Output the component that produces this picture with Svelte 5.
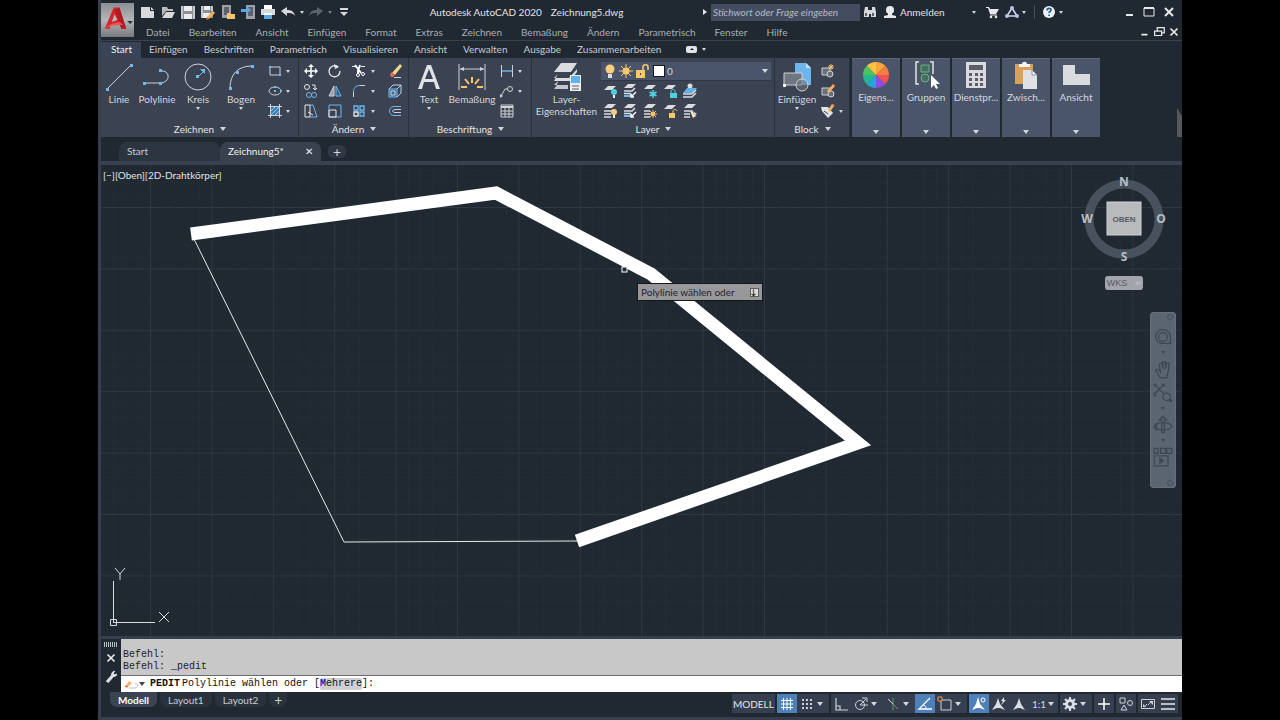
<script lang="ts">
	type Tool = { name: string; icon: string; caret?: boolean; on?: boolean; sep?: boolean };

	// Small icons use a 16x16 grid, large ones a 32x32 grid
	const icons: Record<string, string> = {
		new: '<path d="M1 3h9v4h4v7H1z" fill="#d7d9dc"/><path d="M11 3l3 3h-3z" fill="#d7d9dc"/>',
		open: '<path d="M2 12V3h5l1 2h5v2H6z" fill="#b9bcc0"/><path d="M6 8h9l-3 6H2z" fill="#d7d9dc"/>',
		save: '<path d="M1 2h14v13H1z" fill="#8b9097"/><path d="M4 2h8v5H4zM4 10h8v5H4z" fill="#eceded"/><path d="M1 2h2v13H1zM13 2h2v13h-2z" fill="#c3c6ca"/>',
		saveas: '<path d="M1 2h12v12H1z" fill="#8b9097"/><path d="M4 2h6v4H4zM3 9h7v5H3z" fill="#eceded"/><path d="M1 2h2v12H1zM11 2h2v5h-2z" fill="#c3c6ca"/><path d="M7 13l6-6 2 2-6 6z" fill="#f2b25c"/><path d="M7 13l2 2-3 1z" fill="#e85a4f"/>',
		openweb: '<path d="M2 1h9v13H2z" fill="#9ea2a8"/><path d="M4 3h5v8H4z" fill="#5c626d"/><path d="M7 9h3l1 1h4v5H7z" fill="#f6c26b"/>',
		saveweb: '<path d="M6 1h9v14H6z" fill="#9ea2a8"/><path d="M8 3h5v9H8z" fill="#5c626d"/><path d="M1 5h5V2l5 4-5 4V8H1z" fill="#5aa9e6"/>',
		print: '<path d="M4 1h8v5H4z" fill="#fff"/><path d="M1 5h14v6H1z" fill="#d7d9dc"/><path d="M4 9h8v5H4z" fill="#fff"/><path d="M4 11h8v4H4z" fill="#5fa6df"/>',
		undo: '<path d="M1 7l6-4v3c4 0 7 1 8 6-2-3-4-3-8-3v3z" fill="#d7d9dc"/>',
		redo: '<path d="M15 7L9 3v3c-4 0-7 1-8 6 2-3 4-3 8-3v3z" fill="#5b636f"/>',
		customize: '<path d="M4 4h8v2H4zM4 8h8l-4 4z" fill="#d7d9dc"/>',
		find: '<path d="M3 3h3v3h1v7H2V8zM10 3h3l1 5v5H9V6h1zM7 6h2v4H7z" fill="#d7d9dc"/><path d="M3 9h2v3H3zM10 9h2v3h-2z" fill="#59606c"/>',
		user: '<circle cx="8" cy="6" r="4" fill="#e8e9ea"/><path d="M6 9h4v2l4 1v2H2v-2l4-1z" fill="#e8e9ea"/>',
		cart: '<path d="M2 3h3l1 2h9l-3 5H6L4 4H2z" fill="#e8e9ea"/><path d="M6 11h7" stroke="#e8e9ea"/><circle cx="7" cy="13" r="1.3" fill="#e8e9ea"/><circle cx="12" cy="13" r="1.3" fill="#e8e9ea"/>',
		cloud: '<path d="M8 4L3 12h10z" fill="none" stroke="#cfd4ee" stroke-width="1.6"/><circle cx="8" cy="4" r="2" fill="#b9bff0"/><circle cx="3" cy="12" r="2" fill="#b9bff0"/><circle cx="13" cy="12" r="2" fill="#b9bff0"/>',
		help: '<circle cx="8" cy="8" r="6" fill="#eef2f6"/><path d="M6 6.500c0-3 4-2.500 4-.5 0 1.500-2 1.500-2 3M8 10.500v1.500" fill="none" stroke="#1f5b96" stroke-width="1.6"/>',
		min: '<path d="M5 11h7" stroke="#e8e9ea" stroke-width="2"/>',
		max: '<path d="M3 4h10v8H3z" fill="none" stroke="#e8e9ea"/><path d="M3 4h10" stroke="#e8e9ea" stroke-width="2"/>',
		restore: '<path d="M6 7V3h8v6h-3" fill="none" stroke="#e8e9ea" stroke-width="1.4"/><path d="M3 7h8v5H3z" fill="none" stroke="#e8e9ea" stroke-width="1.4"/>',
		close: '<path d="M4 4l8 8M12 4l-8 8" stroke="#e8e9ea" stroke-width="2"/>',

		line: '<path d="M4 28L28 4" stroke="#cfd2d6"/><path d="M3 27h3v3H3zM27 3h3v3h-3z" fill="#6db9f0"/>',
		pline: '<path d="M3 22h17c10-1 9-13 0-12" fill="none" stroke="#cfd2d6"/><path d="M2 21h3v3H2zM18 21h3v3h-3zM18 8h3v3h-3z" fill="#6db9f0"/>',
		circle: '<circle cx="16" cy="16" r="13" fill="none" stroke="#cfd2d6"/><path d="M16 16l6-6" stroke="#6db9f0"/><path d="M14 14h3v3h-3zM23 8v5l-5-5z" fill="#6db9f0"/>',
		arc: '<path d="M5 27C5 13 13 5 27 5" fill="none" stroke="#cfd2d6"/><path d="M4 26h3v3H4zM11 10h3v3h-3zM26 4h3v3h-3z" fill="#6db9f0"/>',
		rect: '<path d="M3 4h10v8H3z" fill="none" stroke="#cfd2d6"/><path d="M2 3h2v2H2zM12 11h2v2h-2z" fill="#6db9f0"/>',
		ellipse: '<ellipse cx="8" cy="8" rx="6" ry="4" fill="none" stroke="#cfd2d6"/><path d="M7 7h2v2H7zM7 3h2v2H7zM13 7h2v2h-2z" fill="#6db9f0"/>',
		hatch: '<path d="M4 4h8v8H4z" fill="#3f7cb0"/><path d="M4 8l4-4M4 12l8-8M8 12l4-4" stroke="#8cc8f2"/><path d="M1 3.500h14M1 12.500h14M3.500 1v14M12.500 1v14" stroke="#cfd2d6"/>',
		move: '<path d="M8 3v10M3 8h10" stroke="#fff" stroke-width="1.5"/><path d="M8 1l3 3H5zM8 15l3-3H5zM1 8l3-3v6zM15 8l-3-3v6z" fill="#fff"/>',
		rotate: '<path d="M11 4a5.500 5.500 0 1 0 2 4" fill="none" stroke="#e6e8ea" stroke-width="1.3"/><path d="M7 1l5 3-4 2z" fill="#e6e8ea"/>',
		trim: '<path d="M1 3.500h5M10 3.500h4" stroke="#e6e8ea"/><path d="M4 2l6 8M9 2L7 8v3" stroke="#fff" stroke-width="2" fill="none"/><circle cx="7" cy="12" r="1.500" fill="none" stroke="#fff"/><circle cx="12" cy="11" r="1.500" fill="none" stroke="#fff"/>',
		erase: '<path d="M5 10l8-9 2 2-7 9z" fill="#f8d78c"/><path d="M3 11l2-2 3 3-2 2H4z" fill="#e8685f"/><path d="M7 14.500h7" stroke="#cfd2d6"/>',
		copy: '<circle cx="4" cy="4" r="2.500" fill="none" stroke="#e6e8ea"/><path d="M9 2h3v4M10 5l2 2 2-2" fill="none" stroke="#e6e8ea"/><circle cx="6" cy="12" r="2.500" fill="none" stroke="#6db9f0"/><circle cx="11" cy="12" r="2.500" fill="none" stroke="#6db9f0"/>',
		mirror: '<path d="M7 3v10H2z" fill="#9a9fa8" stroke="#cfd2d6"/><path d="M9 3v10h5z" fill="#2f5a7e" stroke="#6db9f0"/>',
		fillet: '<path d="M2.500 9c0-4 2-6.500 6.500-6.500" fill="none" stroke="#6db9f0"/><path d="M9 2.500h5M2.500 14V9" stroke="#cfd2d6"/>',
		explode: '<path d="M2 6h8v8H2z" fill="#3f6a90" stroke="#6db9f0"/><path d="M2 6l4-4h8v8l-4 4M10 6l4-4" fill="none" stroke="#b9d6ec"/><path d="M4 8h4v4H4z" fill="none" stroke="#cfd2d6"/>',
		stretch: '<path d="M2 2h5v12H2z" fill="none" stroke="#e6e8ea"/><path d="M7 2l3 0 4 12H7" fill="none" stroke="#6db9f0"/><path d="M5 9l5 3" stroke="#e6e8ea"/>',
		scale: '<path d="M2 2h12v12H2z" fill="none" stroke="#6db9f0"/><path d="M2 7h7v7H2z" fill="none" stroke="#e6e8ea"/>',
		array: '<path d="M3 3h4v4H3zM9 3h4v4H9zM9 9h4v4H9z" fill="none" stroke="#6db9f0" stroke-width="1.3"/><path d="M3 9h4v4H3z" fill="none" stroke="#e6e8ea" stroke-width="1.3"/>',
		offset: '<path d="M14 3.500H7c-6 0-6 9 0 9h7" fill="none" stroke="#6db9f0"/><path d="M14 6.500H8c-3 0-3 3 0 3h6" fill="none" stroke="#cfd2d6"/>',
		text: '<path fill-rule="evenodd" d="M14 4h4l9 24h-4l-2-7H11l-2 7H5zM16 8l-4 10h8z" fill="#e1e3e6"/>',
		dim: '<path d="M3 3v26M29 3v26" stroke="#cfd2d6"/><path d="M4 8h24" stroke="#cfd2d6"/><path d="M4 8l4-2v4zM28 8l-4-2v4z" fill="#cfd2d6"/><path d="M16 16v6M9 18l4 5M23 18l-4 5M5 26h6M21 26h6" stroke="#f9c76c" stroke-width="2"/>',
		dimlin: '<path d="M2.500 2v12M13.500 2v12" stroke="#cfd2d6"/><path d="M3 8h10" stroke="#6db9f0" stroke-width="1.4"/>',
		leader: '<circle cx="11" cy="6" r="2.500" fill="none" stroke="#cfd2d6"/><path d="M9 6H6l-4 7" fill="none" stroke="#cfd2d6"/><path d="M1 15v-4l3 2z" fill="#cfd2d6"/>',
		table: '<path d="M2 2h12v12H2z" fill="none" stroke="#cfd2d6"/><path d="M2 3h12v2H2z" fill="#cfd2d6"/><path d="M2 8h12M2 11h12M6 5v9M10 5v9" stroke="#cfd2d6"/>',
		layers: '<path d="M10 2h16l-6 9H3z" fill="#dadcdf"/><path d="M7 13l-4 4h15l8-9v3l-7 9H3z" fill="#dadcdf"/><path d="M7 20l-4 4h14v4H3l3-4z" fill="#c3c6cb"/><path d="M19 14h11v16H19z" fill="#eceef0"/><path d="M20 15h9v7h-9z" fill="#5fb2ea"/><path d="M21 25h7M21 28h7" stroke="#59606c"/>',
		lyoff: '<path d="M6 3h8l-4 4H2z" fill="#dadcdf"/><circle cx="12" cy="9" r="3" fill="#4fd0dd"/><path d="M11 12h2v3h-2z" fill="#eceef0"/>',
		lymatch: '<path d="M6 1h8l-4 4H2z" fill="#dadcdf"/><path d="M2 8h8l3-3M2 10.500h7" stroke="#dadcdf" stroke-width="1.5" fill="none"/><path d="M2 13h6l2-2" stroke="#6db9f0" stroke-width="2" fill="none"/><path d="M9 14l5-5M9 11v3h3" stroke="#fff" stroke-width="1.3" fill="none"/>',
		lyfreeze: '<path d="M6 2h8l-4 4H2z" fill="#dadcdf"/><path d="M11 7v8M7.500 9l7 4M14.500 9l-7 4" stroke="#4fd0dd" stroke-width="1.5"/><circle cx="11" cy="11" r="2" fill="none" stroke="#4fd0dd"/>',
		lylock: '<path d="M6 2h8l-4 4H2z" fill="#dadcdf"/><path d="M9 10V8c0-2 4-2 4 0v2" fill="none" stroke="#4fd0dd"/><path d="M8 10h7v5H8z" fill="#4fd0dd"/>',
		lycur: '<circle cx="8" cy="3" r="2.500" fill="#dadcdf"/><path d="M5 5h10l-4 5H1z" fill="#5fb2ea"/><path d="M1 11h9l4-4M1 14h9l4-4" stroke="#dadcdf" stroke-width="1.5" fill="none"/>',
		lyon: '<path d="M6 1h8l-4 4H2z" fill="#dadcdf"/><path d="M2 8h8M2 11h7M2 14h7" stroke="#dadcdf" stroke-width="1.500"/><circle cx="12" cy="9" r="3" fill="#f9cf7d"/><path d="M11 12h2v3h-2z" fill="#eceef0"/>',
		lythaw: '<path d="M6 1h8l-4 4H2z" fill="#dadcdf"/><path d="M2 8h6M2 11h6M2 14h6" stroke="#dadcdf" stroke-width="1.500"/><circle cx="11" cy="11" r="2" fill="#f9c76c"/><path d="M11 7v8M7 11h8M8 8l6 6M14 8l-6 6" stroke="#f9c76c"/>',
		lyunlock: '<path d="M6 2h8l-4 4H2z" fill="#dadcdf"/><path d="M11 10V8c0-2 4-2 4 0" fill="none" stroke="#f9c76c"/><path d="M7 10h6v5H7z" fill="#f9c76c"/>',
		lymore: '<path d="M6 1h8l-4 4H2z" fill="#dadcdf"/><path d="M2 8h9M2 11h6M2 14h6" stroke="#dadcdf" stroke-width="1.500"/><path d="M8 8l3 1 3 4-3 2z" fill="#f3e3c0"/><path d="M11 8l4 3-2 1z" fill="#dadcdf"/>',
		bulb: '<circle cx="8" cy="6" r="4.500" fill="#f9cf7d"/><path d="M6 11h4v4H6z" fill="#dadcdf"/>',
		sun: '<circle cx="8" cy="8" r="3.500" fill="#f9c76c"/><path d="M8 1v14M1 8h14M3 3l10 10M13 3L3 13" stroke="#f9c76c"/>',
		unlocked: '<path d="M9 8V4c0-3 5-3 5 0v3" fill="none" stroke="#f9c76c" stroke-width="1.600"/><path d="M2 7h9v8H2z" fill="#f9c76c"/><path d="M6 10h1v2H6z" fill="#3b4252"/>',
		insert: '<path d="M14 2h11l5 5v17H17V12h-3z" fill="#6db5ee"/><path d="M25 2l5 5h-5z" fill="#c4e2f8"/><path d="M3 12h18v12H3z" fill="#70767f" stroke="#cfd2d6"/><circle cx="21" cy="24" r="6" fill="#70767f" fill-opacity=".6" stroke="#cfd2d6"/><path d="M2 23h3v3H2z" fill="#fff"/>',
		bcreate: '<path d="M2 5h8v7H2z" fill="#6a707b" stroke="#cfd2d6"/><circle cx="10" cy="11" r="3" fill="#6a707b" stroke="#cfd2d6"/><path d="M11 1v6M8 4h6M9 2l4 4M13 2L9 6" stroke="#f9c76c"/>',
		bedit: '<path d="M2 5h8v7H2z" fill="#6a707b" stroke="#cfd2d6"/><circle cx="11" cy="11" r="3" fill="#6a707b" stroke="#cfd2d6"/><path d="M7 8l6-7 2 2-6 7z" fill="#f2b25c"/><path d="M12 2l2-1 1 2z" fill="#e8685f"/>',
		battr: '<path d="M1 4h7l5 6-5 5-6-7z" fill="#e1e3e6"/><path d="M4 8l4 3" stroke="#3b4252"/><path d="M8 7l4-6 2 2-4 6z" fill="#f2b25c"/><path d="M12 1l2 0 1 3z" fill="#e8685f"/>',
		group: '<path d="M9 3H6v22h3M20 3h3v12" fill="none" stroke="#e1e3e6" stroke-width="1.500"/><path d="M11 6h8v7h-8z" fill="#45705d" stroke="#64b588"/><circle cx="15" cy="19" r="4" fill="#45705d" stroke="#64b588"/><path d="M21 16v13l3-3 2 4 2-1-2-4h4z" fill="#fff"/>',
		calc: '<path d="M6 3h20v26H6z" fill="#d9dbde"/><path d="M9 6h14v5H9z" fill="#5a5e66"/><path d="M9 14h3v3H9zM15 14h3v3h-3zM20 14h3v3h-3zM9 19h3v3H9zM15 19h3v3h-3zM20 19h3v3h-3zM9 24h3v3H9zM15 24h3v3h-3zM20 24h3v3h-3z" fill="#5a5e66"/>',
		paste: '<path d="M5 5h18v20H5z" fill="#d9a05c"/><path d="M9 8h11V5h-3c0-3-5-3-5 0H9z" fill="#f4f4f4"/><path d="M13 11h9l5 5v14H13z" fill="#dfe0e3"/><path d="M22 11l5 5h-5z" fill="#fff" stroke="#8d9199"/>',
		view: '<path d="M3 6h12v9h15v11H3z" fill="#d9dbde"/>',

		wheel: '<path d="M8 8m-6 0a6 6 0 1 1 12 0v5H8a6 6 0 0 1-6-5z" fill="none" stroke="#3e4854"/><circle cx="8" cy="8" r="3.500" fill="none" stroke="#3e4854"/>',
		hand: '<path d="M3 8l2 1 1 2-1-7 2-1 1 5V2h2v6l1-5h2l-1 8-1 4H6L2 9z" fill="none" stroke="#3e4854"/>',
		extents: '<path d="M1 1l8 8M9 1L1 9M1 3V1h2M7 1h2v2M1 8v2h2" fill="none" stroke="#3e4854"/><circle cx="11" cy="11" r="3" fill="none" stroke="#3e4854"/><path d="M13 13l2 2" stroke="#3e4854" stroke-width="2"/>',
		orbit: '<ellipse cx="8" cy="9" rx="7" ry="3" fill="none" stroke="#3e4854"/><path d="M8 1l3 3H9v10H7V4H5zM3 8v4l-2-2z" fill="none" stroke="#3e4854"/>',
		motion: '<path d="M1 1h3v4H1zM6 1h4v4H6zM11 1h4v4h-4zM1 7h11v8H1z" fill="none" stroke="#3e4854"/><path d="M5 8l4 3-4 3z" fill="#3e4854"/>',

		grid: '<path d="M4.500 2v12M8 2v12M11.500 2v12M2 4.500h12M2 8h12M2 11.500h12" stroke="#fff"/>',
		snap: '<path d="M3 3h2v2H3zM7 3h2v2H7zM11 3h2v2h-2zM3 7h2v2H3zM7 7h2v2H7zM11 7h2v2h-2zM3 11h2v2H3zM7 11h2v2H7zM11 11h2v2h-2z" fill="#cfd2d6"/>',
		ortho: '<path d="M3 2v12h12M3 10h4v4" fill="none" stroke="#cfd2d6" stroke-width="1.200"/>',
		polar: '<circle cx="7" cy="9" r="4.500" fill="none" stroke="#cfd2d6"/><path d="M7 9h8M7 9l6-6M9 2h5v4" fill="none" stroke="#cfd2d6"/>',
		iso: '<path d="M8 2v12" stroke="#55a36c"/><path d="M3 3l10 10" stroke="#b96c66"/><path d="M3 3l5 5" stroke="#cfd2d6"/>',
		otrack: '<path d="M13 2L2 13h13" fill="none" stroke="#fff" stroke-width="1.300"/><path d="M6 9c2 0 3 2 3 4" fill="none" stroke="#fff"/>',
		osnap: '<path d="M4 4h10v10H4z" fill="none" stroke="#cfd2d6"/><path d="M1 1h4v4H1z" fill="#3b4252" stroke="#e69a5c"/>',
		annvis: '<path d="M7 1l2 7 5 6-5-2H6l-5 2 4-6z" fill="#fff"/><circle cx="12" cy="4" r="2" fill="none" stroke="#fff"/>',
		annauto: '<path d="M7 2l2 6 5 6-5-2H6l-5 2 4-6z" fill="#dcdfe3"/><path d="M13 1l-3 4h2l-2 4 5-5h-2z" fill="#dcdfe3"/>',
		annscale: '<path d="M8 2l2 6 4 6-5-2H7l-5 2 4-6z" fill="#dcdfe3"/>',
		gear: '<circle cx="8" cy="8" r="3.500" fill="none" stroke="#dcdfe3" stroke-width="3"/><path d="M8 1v3M8 12v3M1 8h3M12 8h3M3 3l2 2M11 11l2 2M13 3l-2 2M5 11l-2 2" stroke="#dcdfe3" stroke-width="2"/>',
		plus: '<path d="M8 2v12M2 8h12" stroke="#fff" stroke-width="1.500"/>',
		isolate: '<path d="M2 2h5v5H2z" fill="none" stroke="#cfd2d6"/><circle cx="12" cy="7" r="2.500" fill="none" stroke="#cfd2d6"/><path d="M6 9l3 5H3z" fill="none" stroke="#cfd2d6"/>',
		clean: '<path d="M1.500 3.500h13v9h-13z" fill="none" stroke="#cfd2d6"/><path d="M9 5h4v4zM3 8v3h3z" fill="#cfd2d6"/><path d="M8 9l4-4M4 11l3-3" stroke="#cfd2d6"/>',
		burger: '<path d="M1 3h14M1 8h14M1 13h14" stroke="#e8e9ea" stroke-width="1.500"/>',
		wrench: '<path d="M2 14l6-7c0-3 2-5 5-5l-2 3 1 1 3-1c0 3-2 4-4 4l-6 7z" fill="#dcdfe3"/>',
		pencil: '<path d="M2 11l4-6 3 2-5 5z" fill="#f4b46a"/><path d="M2 11l1-2 2 2z" fill="#e05545"/><path d="M6 12h6c4 0 3-5 0-4" fill="none" stroke="#b9bcc0"/>'
	};

	const quick = ['new', 'open', 'save', 'saveas', 'openweb', 'saveweb', 'print'];
	const menus = ['Datei', 'Bearbeiten', 'Ansicht', 'Einfügen', 'Format', 'Extras', 'Zeichnen', 'Bemaßung', 'Ändern', 'Parametrisch', 'Fenster', 'Hilfe'];
	const tabs = ['Start', 'Einfügen', 'Beschriften', 'Parametrisch', 'Visualisieren', 'Ansicht', 'Verwalten', 'Ausgabe', 'Zusammenarbeiten'];

	const drawTools: Tool[] = [
		{ name: 'Linie', icon: 'line' },
		{ name: 'Polylinie', icon: 'pline' },
		{ name: 'Kreis', icon: 'circle', caret: true },
		{ name: 'Bogen', icon: 'arc', caret: true }
	];
	const drawSmall: Tool[] = [
		{ name: 'Rechteck', icon: 'rect', caret: true },
		{ name: 'Ellipse', icon: 'ellipse', caret: true },
		{ name: 'Schraffur', icon: 'hatch', caret: true }
	];
	const modifyTools: Tool[] = [
		{ name: 'Schieben', icon: 'move' },
		{ name: 'Drehen', icon: 'rotate' },
		{ name: 'Stutzen', icon: 'trim', caret: true },
		{ name: 'Löschen', icon: 'erase' },
		{ name: 'Kopieren', icon: 'copy' },
		{ name: 'Spiegeln', icon: 'mirror' },
		{ name: 'Abrunden', icon: 'fillet', caret: true },
		{ name: 'Ursprung', icon: 'explode' },
		{ name: 'Strecken', icon: 'stretch' },
		{ name: 'Skalieren', icon: 'scale' },
		{ name: 'Reihe', icon: 'array', caret: true },
		{ name: 'Versetzen', icon: 'offset' }
	];
	const noteSmall: Tool[] = [
		{ name: 'Linear', icon: 'dimlin', caret: true },
		{ name: 'Führungslinie', icon: 'leader', caret: true },
		{ name: 'Tabelle', icon: 'table' }
	];
	const layerTools = ['lyoff', 'lymatch', 'lyfreeze', 'lylock', 'lycur', 'lyon', 'lymatch', 'lythaw', 'lyunlock', 'lymore'];
	const blockSmall: Tool[] = [
		{ name: 'Erstellen', icon: 'bcreate' },
		{ name: 'Bearbeiten', icon: 'bedit' },
		{ name: 'Attribute', icon: 'battr', caret: true }
	];
	const collapsed: Tool[] = [
		{ name: 'Eigens...', icon: 'colors' },
		{ name: 'Gruppen', icon: 'group' },
		{ name: 'Dienstpr...', icon: 'calc' },
		{ name: 'Zwisch...', icon: 'paste' },
		{ name: 'Ansicht', icon: 'view' }
	];
	const nav: Tool[] = [
		{ name: 'Navigationsrad', icon: 'wheel', caret: true },
		{ name: 'Pan', icon: 'hand' },
		{ name: 'Zoom', icon: 'extents', caret: true },
		{ name: 'Orbit', icon: 'orbit', caret: true },
		{ name: 'ShowMotion', icon: 'motion' }
	];
	const status: Tool[] = [
		{ name: 'Raster', icon: 'grid', on: true },
		{ name: 'Fang', icon: 'snap', caret: true, sep: true },
		{ name: 'Ortho', icon: 'ortho' },
		{ name: 'Polarfang', icon: 'polar', caret: true },
		{ name: 'Isometrie', icon: 'iso', caret: true },
		{ name: 'Objektfangspur', icon: 'otrack', on: true },
		{ name: 'Objektfang', icon: 'osnap', caret: true, sep: true },
		{ name: 'Beschriftungssichtbarkeit', icon: 'annvis', on: true },
		{ name: 'Automatisch skalieren', icon: 'annauto' },
		{ name: 'Beschriftungsmaßstab', icon: 'annscale' }
	];

	// Major grid lines every 61.4 units, minor ones in fifths
	const step = 61.4;
	const lines = Array.from({ length: 160 }, (_, i) => i - 4);
	const wheelColors = ['#fba63c', '#f47c43', '#ee5350', '#8a4be8', '#23a4dd', '#27b98e', '#4cc35f', '#fbc342'];

	function slice(i: number): string {
		const a = (i * Math.PI) / 4 - Math.PI / 2;
		const b = a + Math.PI / 4;
		return `M16 16L${16 + 13 * Math.cos(a)} ${16 + 13 * Math.sin(a)}A13 13 0 0 1 ${16 + 13 * Math.cos(b)} ${16 + 13 * Math.sin(b)}z`;
	}

	let activeTab = $state('Start');
	let layout = $state('Modell');
	let search = $state('');
	let layer = $state('0');
</script>

{#snippet icon(name: string, size = 16)}
	<svg class={size === 32 ? 'icon-lg' : 'icon'} viewBox="0 0 {size} {size}" aria-hidden="true">
		{#if name === 'colors'}
			{#each wheelColors as color, i}
				<path d={slice(i)} fill={color} />
			{/each}
		{:else}
			{@html icons[name]}
		{/if}
	</svg>
{/snippet}

{#snippet big(tool: Tool)}
	<button class="big">
		{@render icon(tool.icon, 32)}
		<span>{tool.name}</span>
		{#if tool.caret}<i class="caret"></i>{/if}
	</button>
{/snippet}

{#snippet small(tool: Tool)}
	<button class="small" aria-label={tool.name}>
		{@render icon(tool.icon)}
		{#if tool.caret}<i class="caret"></i>{/if}
	</button>
{/snippet}

<div class="screen">
	<div class="app">
		<header>
			<button class="app-button" aria-label="Anwendungsmenü">
				<svg viewBox="0 0 34 34" aria-hidden="true">
					<path d="M4 26L13 4h6l7 22h-5l-2-6-9 2-1 4z" fill="#d3232b" />
					<path d="M14 11l-3 8 6-2z" fill="#b9b6b6" />
					<path d="M19 4l7 22h-5L14 7z" fill="#b01b23" />
					<path d="M4 26l6-5 9-2 4 3-12 1z" fill="#ef5350" />
					<path d="M27 18h6l-3 3z" fill="#2b2f36" />
				</svg>
			</button>
			<div class="bars">
				<div class="title-row">
					<div class="quick">
						{#each quick as name}
							<button class="ic" aria-label={name}>{@render icon(name)}</button>
						{/each}
						<button class="ic" aria-label="Zurück">{@render icon('undo')}</button>
						<i class="caret slot"></i>
						<button class="ic" aria-label="Wiederholen">{@render icon('redo')}</button>
						<i class="caret slot dim"></i>
						<button class="ic" aria-label="Anpassen">{@render icon('customize')}</button>
					</div>
					<div class="caption"><span>Autodesk AutoCAD 2020</span><span>Zeichnung5.dwg</span></div>
					<i class="arrow"></i>
					<input class="search" aria-label="Suche" placeholder="Stichwort oder Frage eingeben" bind:value={search} />
					<button class="ic" aria-label="Suchen">{@render icon('find')}</button>
					<button class="account">{@render icon('user')}<span>Anmelden</span><i class="caret"></i></button>
					<button class="ic" aria-label="App Store">{@render icon('cart')}</button>
					<button class="ic" aria-label="Autodesk">{@render icon('cloud')}</button>
					<i class="caret"></i>
					<i class="divider"></i>
					<button class="ic" aria-label="Hilfe">{@render icon('help')}</button>
					<i class="caret"></i>
					<div class="window">
						<button class="ic" aria-label="Minimieren">{@render icon('min')}</button>
						<button class="ic" aria-label="Maximieren">{@render icon('max')}</button>
						<button class="ic" aria-label="Schließen">{@render icon('close')}</button>
					</div>
				</div>
				<div class="menu-row">
					<nav>
						{#each menus as item}
							<button>{item}</button>
						{/each}
					</nav>
					<div class="window doc">
						<button aria-label="Zeichnung minimieren">{@render icon('min')}</button>
						<button aria-label="Zeichnung wiederherstellen">{@render icon('restore')}</button>
						<button aria-label="Zeichnung schließen">{@render icon('close')}</button>
					</div>
				</div>
			</div>
		</header>

		<div class="tabs">
			{#each tabs as tab}
				<button class:active={activeTab === tab} onclick={() => (activeTab = tab)}>{tab}</button>
			{/each}
			<button class="pill" aria-label="Multifunktionsleiste minimieren"><b><i></i></b><i class="caret"></i></button>
		</div>

		<div class="ribbon">
			<section class="panel">
				<div class="body draw">
					{#each drawTools as tool}{@render big(tool)}{/each}
					<div class="column">
						{#each drawSmall as tool}{@render small(tool)}{/each}
					</div>
				</div>
				<button class="foot">Zeichnen<i class="caret wide"></i></button>
			</section>
			<section class="panel">
				<div class="body modify">
					{#each modifyTools as tool}{@render small(tool)}{/each}
				</div>
				<button class="foot">Ändern<i class="caret wide"></i></button>
			</section>
			<section class="panel">
				<div class="body note">
					{@render big({ name: 'Text', icon: 'text', caret: true })}
					{@render big({ name: 'Bemaßung', icon: 'dim' })}
					<div class="column">
						{#each noteSmall as tool}{@render small(tool)}{/each}
					</div>
				</div>
				<button class="foot">Beschriftung<i class="caret wide"></i></button>
			</section>
			<section class="panel">
				<div class="body layer">
					{@render big({ name: 'Layer- Eigenschaften', icon: 'layers' })}
					<div>
						<div class="combo">
							{@render icon('bulb')}
							{@render icon('sun')}
							{@render icon('unlocked')}
							<b></b>
							<select aria-label="Layer" bind:value={layer}>
								<option>0</option>
							</select>
							<i class="caret wide"></i>
						</div>
						<div class="layer-tools">
							{#each layerTools as name}
								<button class="small" aria-label={name}>{@render icon(name)}</button>
							{/each}
						</div>
					</div>
				</div>
				<button class="foot">Layer<i class="caret wide"></i></button>
			</section>
			<section class="panel">
				<div class="body block">
					{@render big({ name: 'Einfügen', icon: 'insert', caret: true })}
					<div class="column">
						{#each blockSmall as tool}{@render small(tool)}{/each}
					</div>
				</div>
				<button class="foot">Block<i class="caret wide"></i></button>
			</section>
			<div class="collapsed">
				{#each collapsed as tool}
					<button>
						{@render icon(tool.icon, 32)}
						<span>{tool.name}</span>
						<i class="caret wide"></i>
					</button>
				{/each}
			</div>
			<svg class="corner" viewBox="0 0 5 29" aria-hidden="true"><path d="M0 0l5 8v21H0z" /></svg>
		</div>

		<div class="files">
			<button class="file">Start</button>
			<button class="file active">Zeichnung5*<span>✕</span></button>
			<button class="add" aria-label="Neue Zeichnung">+</button>
		</div>

		<main>
			<svg class="drawing" aria-hidden="true">
				{#each lines as n}
					<path class={(n + 400) % 5 === 0 ? 'major' : 'minor'} d="M{49.5 + (n * step) / 5} 0v2000M0 {42.5 + (n * step) / 5}h4000" />
				{/each}
				<polyline class="thin" points="92,72 243,377 477,376" />
				<polyline class="thick" points="90,69 395,28 550,109 757,278 476,376" />
				<rect class="pick" x="521" y="102" width="5" height="5" />
			</svg>

			<button class="view-label">[−][Oben][2D-Drahtkörper]</button>

			<svg class="ucs" viewBox="0 0 64 64" aria-hidden="true">
				<path d="M5.500 16v42M5 57.500h42M2.500 54.500h6v6h-6zM7 3l5 6 5-6M12 9v6M51 47l10 10M61 47L51 57" />
			</svg>

			<div class="prompt">Polylinie wählen oder<b>↓</b></div>

			<div class="cube">
				<svg viewBox="0 0 88 92">
					<circle cx="44" cy="46" r="35" />
					<rect x="27" y="29" width="34" height="33" />
					<text class="face" x="44" y="49">OBEN</text>
					<text x="44" y="13">N</text>
					<text x="44" y="88">S</text>
					<text x="7" y="50">W</text>
					<text x="81" y="50">O</text>
				</svg>
				<button>WKS<i></i></button>
			</div>

			<div class="navbar">
				<i class="dot"></i>
				{#each nav as tool}
					<button aria-label={tool.name}>{@render icon(tool.icon)}</button>
					{#if tool.caret}<i class="caret"></i>{/if}
				{/each}
				<i class="dot last"></i>
			</div>
		</main>

		<div class="command">
			<div class="handle">
				<i class="grip"></i>
				<button aria-label="Befehlszeile schließen">{@render icon('close')}</button>
				<button aria-label="Anpassen">{@render icon('wrench')}</button>
			</div>
			<div class="console">
				<div class="history"><p>Befehl:</p><p>Befehl: _pedit</p></div>
				<div class="entry">
					{@render icon('pencil')}
					<i class="caret"></i>
					<strong>PEDIT</strong>
					<span>Polylinie wählen oder [<button><em>M</em>ehrere</button>]:</span>
				</div>
			</div>
		</div>

		<footer>
			<div class="layouts">
				{#each ['Modell', 'Layout1', 'Layout2'] as name}
					<button class:active={layout === name} onclick={() => (layout = name)}>{name}</button>
				{/each}
				<button class="plus" aria-label="Neues Layout">+</button>
			</div>
			<div class="status">
				<button class="label sep">MODELL</button>
				{#each status as item}
					<button class:on={item.on} class:sep={item.sep} aria-label={item.name}>
						{@render icon(item.icon)}
						{#if item.caret}<i class="caret"></i>{/if}
					</button>
				{/each}
				<button class="sep scale">1:1<i class="caret"></i></button>
				<button class="sep" aria-label="Arbeitsbereich">{@render icon('gear')}<i class="caret"></i></button>
				<button class="sep" aria-label="Monitor">{@render icon('plus')}</button>
				<button class="sep" aria-label="Objekte isolieren">{@render icon('isolate')}</button>
				<button aria-label="Vollbild">{@render icon('clean')}</button>
				<button aria-label="Anpassung">{@render icon('burger')}</button>
			</div>
		</footer>
	</div>
</div>

<style>
	:global(body) {
		margin: 0;
		background: #000;
	}
	.screen {
		box-sizing: border-box;
		min-height: 100vh;
		padding: 0 98px;
		display: flex;
		background: #000;
	}
	.app {
		flex: 1;
		min-width: 0;
		box-sizing: border-box;
		display: flex;
		flex-direction: column;
		overflow: hidden;
		border-left: 3px solid #363f4d;
		border-bottom: 3px solid #363f4d;
		background: #202831;
		color: #d3d7dc;
		font: 10px/14px Lato, 'Open Sans', sans-serif;
	}
	button,
	input,
	select {
		margin: 0;
		padding: 0;
		border: 0;
		background: none;
		color: inherit;
		font: inherit;
		white-space: nowrap;
	}
	button {
		display: flex;
		align-items: center;
		justify-content: center;
	}
	.icon {
		width: 16px;
		height: 16px;
		flex: none;
	}
	.icon-lg {
		width: 32px;
		height: 32px;
		flex: none;
	}
	.caret {
		flex: none;
		width: 0;
		height: 0;
		border: 2px solid transparent;
		border-top: 3px solid #d3d7dc;
		border-bottom: 0;
	}
	.caret.wide {
		border-width: 4px 3px 0;
	}
	.caret.dim {
		opacity: 0.5;
	}
	.caret.slot {
		margin: 0 2px;
	}

	/* Title and menu bars */
	header {
		display: flex;
		height: 40px;
		border-bottom: 1px solid #39424f;
	}
	.app-button {
		width: 33px;
		height: 34px;
		margin-top: 3px;
		background: linear-gradient(#8b8e93, #b5b6b9 50%, #77797e);
	}
	.app-button svg {
		width: 33px;
		height: 34px;
	}
	.bars {
		flex: 1;
		min-width: 0;
	}
	.title-row {
		height: 24px;
		display: flex;
		align-items: center;
		color: #e2e4e7;
	}
	.quick {
		display: flex;
		align-items: center;
		padding-left: 4px;
	}
	.ic {
		width: 20px;
		height: 20px;
	}
	.caption {
		flex: 1;
		display: flex;
		justify-content: center;
		gap: 9px;
		padding-right: 4px;
		line-height: 12px;
		white-space: nowrap;
	}
	.arrow {
		border: 3px solid transparent;
		border-left: 4px solid #e2e4e7;
		border-right: 0;
		margin-right: 4px;
	}
	.search {
		width: 149px;
		height: 17px;
		box-sizing: border-box;
		padding: 0 2px;
		background: #444c60;
	}
	.search::placeholder {
		color: #b4bac5;
		font-style: italic;
		opacity: 1;
	}
	.account {
		width: 96px;
		gap: 2px;
		padding-left: 2px;
		margin-right: 6px;
	}
	.account .caret {
		margin-left: auto;
	}
	.divider {
		width: 1px;
		height: 14px;
		margin: 0 4px 0 8px;
		background: #454d59;
	}
	.window {
		display: flex;
		margin: 0 3px 0 56px;
	}
	.menu-row {
		height: 16px;
		display: flex;
		align-items: center;
		justify-content: space-between;
		color: #a9afb8;
	}
	nav {
		display: flex;
		gap: 19px;
		padding-left: 12px;
	}
	nav button {
		line-height: 12px;
	}
	.window.doc {
		margin: 0 1px;
	}
	.window.doc button {
		width: 15px;
		height: 16px;
	}
	.window.doc .icon {
		width: 14px;
		height: 14px;
	}

	/* Ribbon */
	.tabs {
		display: flex;
		height: 16px;
		margin-top: 1px;
	}
	.tabs button {
		padding: 0 8px 2px;
		color: #c7ccd3;
	}
	.tabs .active {
		padding: 0 9px 2px 10px;
		background: #3b4356;
		color: #f0f1f3;
	}
	.tabs .pill {
		gap: 5px;
		margin-left: 9px;
	}
	.pill b {
		display: flex;
		justify-content: center;
		align-items: center;
		width: 11px;
		height: 7px;
		border-radius: 2px;
		background: #e2e4e7;
	}
	.pill b i {
		border: 2px solid transparent;
		border-top: 0;
		border-bottom-color: #202831;
	}
	.ribbon {
		display: flex;
		height: 79px;
	}
	.panel {
		display: flex;
		flex-direction: column;
		background: #3b4252;
		box-shadow: inset -1px 0 #29303c;
	}
	.body {
		display: grid;
		height: 65px;
		padding-top: 3px;
		box-sizing: border-box;
		align-content: start;
	}
	.draw {
		grid-template-columns: 36px 40px 42px 44px 36px;
	}
	.modify {
		grid-template-columns: 24px 24px 36px 26px;
		grid-auto-rows: 20px;
	}
	.note {
		grid-template-columns: 40px 46px 37px;
	}
	.layer {
		grid-template-columns: 69px 174px;
	}
	.block {
		grid-template-columns: 44px 31px;
	}
	.big {
		flex-direction: column;
		justify-content: flex-start;
	}
	.big span {
		line-height: 12px;
		white-space: normal;
	}
	.big .caret {
		margin-top: 2px;
	}
	.column {
		display: grid;
		grid-auto-rows: 20px;
	}
	.small {
		justify-content: flex-start;
		gap: 4px;
		padding-left: 4px;
	}
	.column .small {
		gap: 3px;
	}
	.block .small {
		padding-left: 1px;
	}
	.foot {
		gap: 6px;
		height: 14px;
		padding-bottom: 2px;
		color: #e2e4e7;
	}
	.combo {
		display: flex;
		align-items: center;
		height: 18px;
		margin-top: 1px;
		padding: 0 3px 0 1px;
		background: #4a546a;
		border-bottom: 1px solid #303848;
		width: 166px;
	}
	.combo b {
		width: 10px;
		height: 10px;
		margin: 0 2px 0 3px;
		border: 1px solid #15181e;
		background: #fff;
	}
	.combo select {
		flex: 1;
		appearance: none;
	}
	.layer-tools {
		display: grid;
		grid-template-columns: repeat(5, 20px);
		grid-auto-rows: 20px;
	}
	.layer-tools .small {
		padding-left: 1px;
	}
	.collapsed {
		display: flex;
		gap: 2px;
		padding-left: 2px;
	}
	.collapsed button {
		width: 48px;
		flex-direction: column;
		justify-content: flex-start;
		padding: 0 0 3px;
		background: #4b556a;
		border-top: 1px solid #5b6579;
	}
	.collapsed span {
		line-height: 12px;
	}
	.collapsed .caret {
		margin-top: auto;
	}
	.corner {
		width: 5px;
		height: 29px;
		margin: auto 0 0 auto;
		fill: #57575c;
	}

	/* Drawing tabs */
	.files {
		display: flex;
		align-items: flex-end;
		height: 24px;
		border-bottom: 4px solid #39414e;
		padding-left: 18px;
	}
	.file {
		width: 101px;
		height: 19px;
		padding: 0 8px 1px;
		box-sizing: border-box;
		justify-content: flex-start;
		border-radius: 8px 8px 0 0;
		background: #2c343f;
		color: #c7ccd3;
	}
	.file.active {
		justify-content: space-between;
		background: #39414e;
		color: #f0f1f3;
	}
	.add {
		width: 18px;
		height: 13px;
		margin: 0 0 3px 7px;
		border-radius: 5px;
		background: #303844;
		font-size: 14px;
	}

	/* Model space */
	main {
		flex: 1;
		position: relative;
		overflow: hidden;
		background: #202831;
	}
	.drawing {
		position: absolute;
		width: 100%;
		height: 100%;
	}
	.drawing path {
		fill: none;
		stroke: #242d37;
	}
	.drawing .major {
		stroke: #2f3843;
	}
	.thick {
		fill: none;
		stroke: #fff;
		stroke-width: 13;
		stroke-miterlimit: 8;
	}
	.thin {
		fill: none;
		stroke: #e8eaec;
	}
	.drawing .pick {
		fill: #202831;
		stroke: #fff;
	}
	.view-label {
		position: absolute;
		left: 2px;
		top: 3px;
		color: #e2e4e7;
	}
	.ucs {
		position: absolute;
		left: 7px;
		bottom: 7px;
		width: 64px;
		height: 64px;
		fill: none;
		stroke: #d7d9dc;
	}
	.prompt {
		position: absolute;
		left: 536px;
		top: 118px;
		display: flex;
		align-items: center;
		gap: 15px;
		height: 16px;
		padding: 0 3px;
		border: 1px solid #15171b;
		background: #98979a;
		color: #22252a;
		white-space: nowrap;
	}
	.prompt b {
		width: 7px;
		height: 7px;
		border: 1px solid #5a5c60;
		background: #dcdcdc;
		font-size: 8px;
		line-height: 7px;
	}
	.cube {
		position: absolute;
		right: 14px;
		top: 8px;
		width: 88px;
		display: flex;
		flex-direction: column;
		align-items: center;
		gap: 11px;
	}
	.cube svg {
		width: 88px;
		height: 92px;
	}
	.cube circle {
		fill: none;
		stroke: #48525d;
		stroke-width: 9;
	}
	.cube rect {
		fill: #b9babc;
		stroke: #d0d1d3;
	}
	.cube text {
		fill: #b9bec5;
		font: bold 12px 'Open Sans', sans-serif;
		text-anchor: middle;
	}
	.cube .face {
		fill: #565b63;
		font: bold 8px 'Liberation Sans', sans-serif;
	}
	.cube button {
		width: 38px;
		height: 14px;
		gap: 8px;
		border-radius: 3px;
		background: #a3a4ad;
		color: #565b66;
		font: 9px 'Liberation Sans', sans-serif;
	}
	.cube button i {
		width: 6px;
		height: 4px;
		border-radius: 2px;
		background: #b1b2ba;
	}
	.navbar {
		position: absolute;
		right: 6px;
		top: 147px;
		box-sizing: border-box;
		width: 26px;
		height: 176px;
		display: flex;
		flex-direction: column;
		align-items: center;
		border-radius: 3px;
		border: 1px solid #66707a;
		background: #5b656f;
	}
	.navbar button {
		height: 24px;
	}
	.navbar .icon {
		width: 20px;
		height: 20px;
	}
	.navbar .caret {
		margin: 2px 0 3px;
		border-top-color: #3e4854;
	}
	.dot {
		width: 4px;
		height: 4px;
		margin: 1px 2px 5px auto;
		border: 1px solid #454f5a;
		border-radius: 50%;
	}
	.dot.last {
		margin: auto 2px 1px auto;
	}

	/* Command line */
	.command {
		display: flex;
		height: 53px;
		border-top: 3px solid #363f4d;
	}
	.handle {
		width: 20px;
		display: flex;
		flex-direction: column;
		align-items: center;
		gap: 4px;
		padding-top: 3px;
		box-sizing: border-box;
	}
	.handle .icon {
		width: 14px;
		height: 14px;
	}
	.grip {
		width: 14px;
		height: 5px;
		background: repeating-linear-gradient(90deg, #b9bdc4 0 1px, transparent 1px 2px);
	}
	.console {
		flex: 1;
		display: flex;
		flex-direction: column;
		color: #222;
		font: 10px/12px 'Liberation Mono', monospace;
	}
	.history {
		flex: 1;
		display: flex;
		flex-direction: column;
		justify-content: flex-end;
		padding: 0 2px 2px;
		background: #c8c8c8;
		border-bottom: 1px solid #6d6d6d;
	}
	.history p {
		margin: 0;
	}
	.entry {
		display: flex;
		align-items: center;
		height: 16px;
		padding-left: 2px;
		background: #fff;
		color: #111;
	}
	.entry .caret {
		margin: 0 5px 0 0;
		border-width: 4px 3px 0;
		border-top-color: #444;
	}
	.entry strong {
		margin-right: 2px;
	}
	.entry button {
		display: inline;
		background: #d0d0d4;
		border-radius: 2px;
	}
	.entry em {
		color: #2a2ac0;
		font-style: normal;
		font-weight: bold;
	}

	/* Layout tabs and status bar */
	footer {
		display: flex;
		justify-content: space-between;
		height: 25px;
	}
	.layouts {
		display: flex;
		gap: 3px;
		padding-left: 9px;
	}
	.layouts button {
		height: 15px;
		padding: 0 8px;
		border-radius: 0 0 7px 7px;
		background: #2a323d;
		color: #c7ccd3;
	}
	.layouts .active {
		background: #3b4454;
		color: #fff;
		font-weight: bold;
	}
	.layouts .plus {
		padding: 0 5px;
		font-size: 14px;
	}
	.status {
		display: flex;
		align-items: center;
		padding: 0 4px 2px 0;
	}
	.status button {
		height: 19px;
		padding: 0 2px;
		background: #363f4f;
	}
	.status .sep {
		margin-right: 2px;
	}
	.status .on {
		background: #4f80b8;
	}
	.status .caret {
		margin: 0 2px;
		border-width: 4px 3px 0;
	}
	.status button.label {
		padding: 0 1px;
		color: #e2e4e7;
	}
	.status button:not(.label) .caret {
		margin-right: 4px;
	}
	.status button.scale {
		padding: 0 0 0 3px;
	}
</style>
